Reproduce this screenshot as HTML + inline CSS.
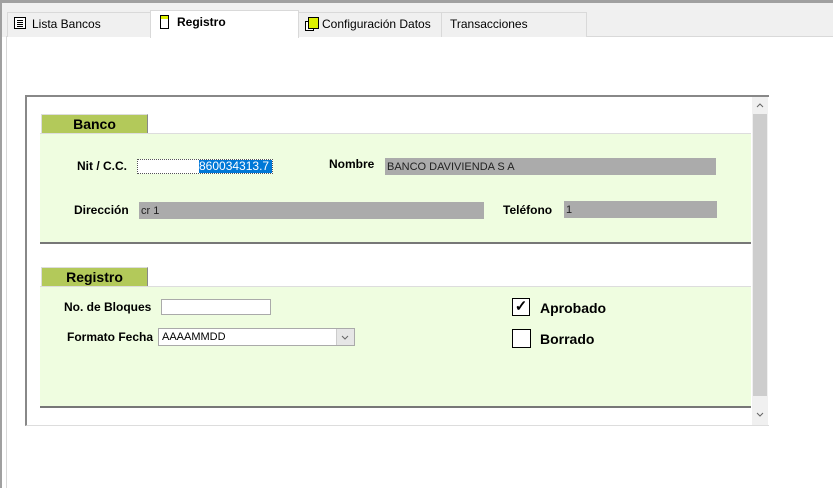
<!DOCTYPE html>
<html><head><meta charset="utf-8"><style>
*{margin:0;padding:0;box-sizing:border-box}
body{width:833px;height:488px;background:#fff;position:relative;overflow:hidden;font-family:"Liberation Sans",sans-serif;font-size:12px;color:#000}
.a{position:absolute}
.tab{position:absolute;top:12px;height:25px;border:1px solid #d9d9d9;border-bottom:none;background:#f0f0f0;font-size:12px;padding-top:4px}
.lbl{position:absolute;font-weight:bold;font-size:12px}
.gf{position:absolute;background:#ababab;font-size:11px;padding-left:2px;padding-top:2px;height:17px;line-height:15px;color:#222}
.hdr{position:absolute;left:41px;width:107px;height:20px;background:#b3c95a;border:1px solid #888;border-top-color:#ddd;border-left-color:#ddd;font-weight:bold;font-size:14px;text-align:center;line-height:18px}
.panel{position:absolute;left:40px;width:711px;background:#effde0;border-top:1px solid #ddd;border-bottom:2px solid #777}
</style></head><body>
<div class="a" style="left:0;top:0;width:833px;height:3px;background:#a0a0a0"></div>
<div class="a" style="left:0;top:3px;width:833px;height:34px;background:#f0f0f0"></div>
<div class="a" style="left:0;top:0;width:2px;height:488px;background:#a0a0a0"></div>
<div class="a" style="left:6px;top:36px;width:827px;height:452px;background:#fff;border-left:1px solid #d9d9d9;border-top:1px solid #d9d9d9"></div>
<div class="tab" style="left:7px;width:144px;padding-left:24px">Lista Bancos</div>
<svg class="a" style="left:13px;top:16px" width="14" height="14"><rect x="1.5" y="1.5" width="11" height="11" fill="#fff" stroke="#000"/><path d="M4 4.5h6M4 6.5h6M4 8.5h6M4 10.5h6" stroke="#000"/></svg>
<div class="tab" style="left:298px;width:144px;padding-left:23px">Configuración Datos</div>
<svg class="a" style="left:304px;top:16px" width="16" height="16"><rect x="1.5" y="5.5" width="8" height="9" fill="#fff" stroke="#000"/><rect x="4.5" y="1.5" width="10" height="11" fill="#ddf000" stroke="#000"/></svg>
<div class="tab" style="left:441px;width:146px;padding-left:8px">Transacciones</div>
<div class="a" style="left:150px;top:10px;width:149px;height:28px;background:#fff;border:1px solid #d9d9d9;border-bottom:none;font-weight:bold;padding:4px 0 0 26px;font-size:12px">Registro</div>
<svg class="a" style="left:159px;top:14px" width="12" height="16"><rect x="1.5" y="1.5" width="8" height="13" fill="#fff" stroke="#000"/><rect x="2" y="2" width="7" height="3" fill="#ddf000"/></svg>

<div class="a" style="left:25px;top:95px;width:744px;height:331px;border-top:2px solid #888;border-left:2px solid #888;border-bottom:1px solid #ddd;background:#fff"></div>
<div class="a" style="left:752px;top:97px;width:16px;height:328px;background:#f0f0f0"></div>
<div class="a" style="left:753px;top:114px;width:14px;height:282px;background:#cdcdcd"></div>
<svg class="a" style="left:755px;top:101px" width="10" height="8"><path d="M2 6L5 3L8 6" stroke="#666" fill="none"/></svg>
<svg class="a" style="left:755px;top:410px" width="10" height="8"><path d="M2 3L5 6L8 3" stroke="#666" fill="none"/></svg>

<div class="hdr" style="top:114px">Banco</div>
<div class="panel" style="top:133px;height:111px"></div>
<div class="lbl" style="left:77px;top:159px">Nit / C.C.</div>
<div class="a" style="left:137px;top:159px;width:136px;height:15px;border:1px dotted #555;background:#fff"></div>
<div class="a" style="left:199px;top:160px;width:73px;height:13px;background:#0078d7;color:#fff;font-size:12px;line-height:13px">860034313.7</div>
<div class="lbl" style="left:329px;top:157px">Nombre</div>
<div class="gf" style="left:385px;top:158px;width:331px">BANCO DAVIVIENDA S A</div>
<div class="lbl" style="left:74px;top:203px">Dirección</div>
<div class="gf" style="left:139px;top:202px;width:345px">cr 1</div>
<div class="lbl" style="left:503px;top:203px">Teléfono</div>
<div class="gf" style="left:564px;top:201px;width:153px">1</div>

<div class="hdr" style="top:267px">Registro</div>
<div class="panel" style="top:286px;height:122px"></div>
<div class="lbl" style="left:64px;top:300px">No. de Bloques</div>
<div class="a" style="left:161px;top:299px;width:110px;height:16px;background:#fff;border:1px solid #aaa"></div>
<div class="lbl" style="left:67px;top:330px">Formato Fecha</div>
<div class="a" style="left:158px;top:328px;width:197px;height:18px;background:#fff;border:1px solid #aaa;font-size:11px;padding:2px 0 0 3px">AAAAMMDD</div>
<div class="a" style="left:336px;top:329px;width:18px;height:16px;background:#e6e6e6;border-left:1px solid #ccc"></div>
<svg class="a" style="left:340px;top:333px" width="10" height="8"><path d="M2 3L5 6L8 3" stroke="#666" fill="none"/></svg>
<div class="a" style="left:512px;top:298px;width:18px;height:18px;border:1px solid #000;background:#fff;font-size:15px;line-height:16px;text-align:center;font-weight:bold">✓</div>
<div class="a" style="left:540px;top:300px;font-weight:bold;font-size:14px">Aprobado</div>
<div class="a" style="left:512px;top:329px;width:19px;height:19px;border:1px solid #000;background:#fff"></div>
<div class="a" style="left:540px;top:331px;font-weight:bold;font-size:14px">Borrado</div>
</body></html>
